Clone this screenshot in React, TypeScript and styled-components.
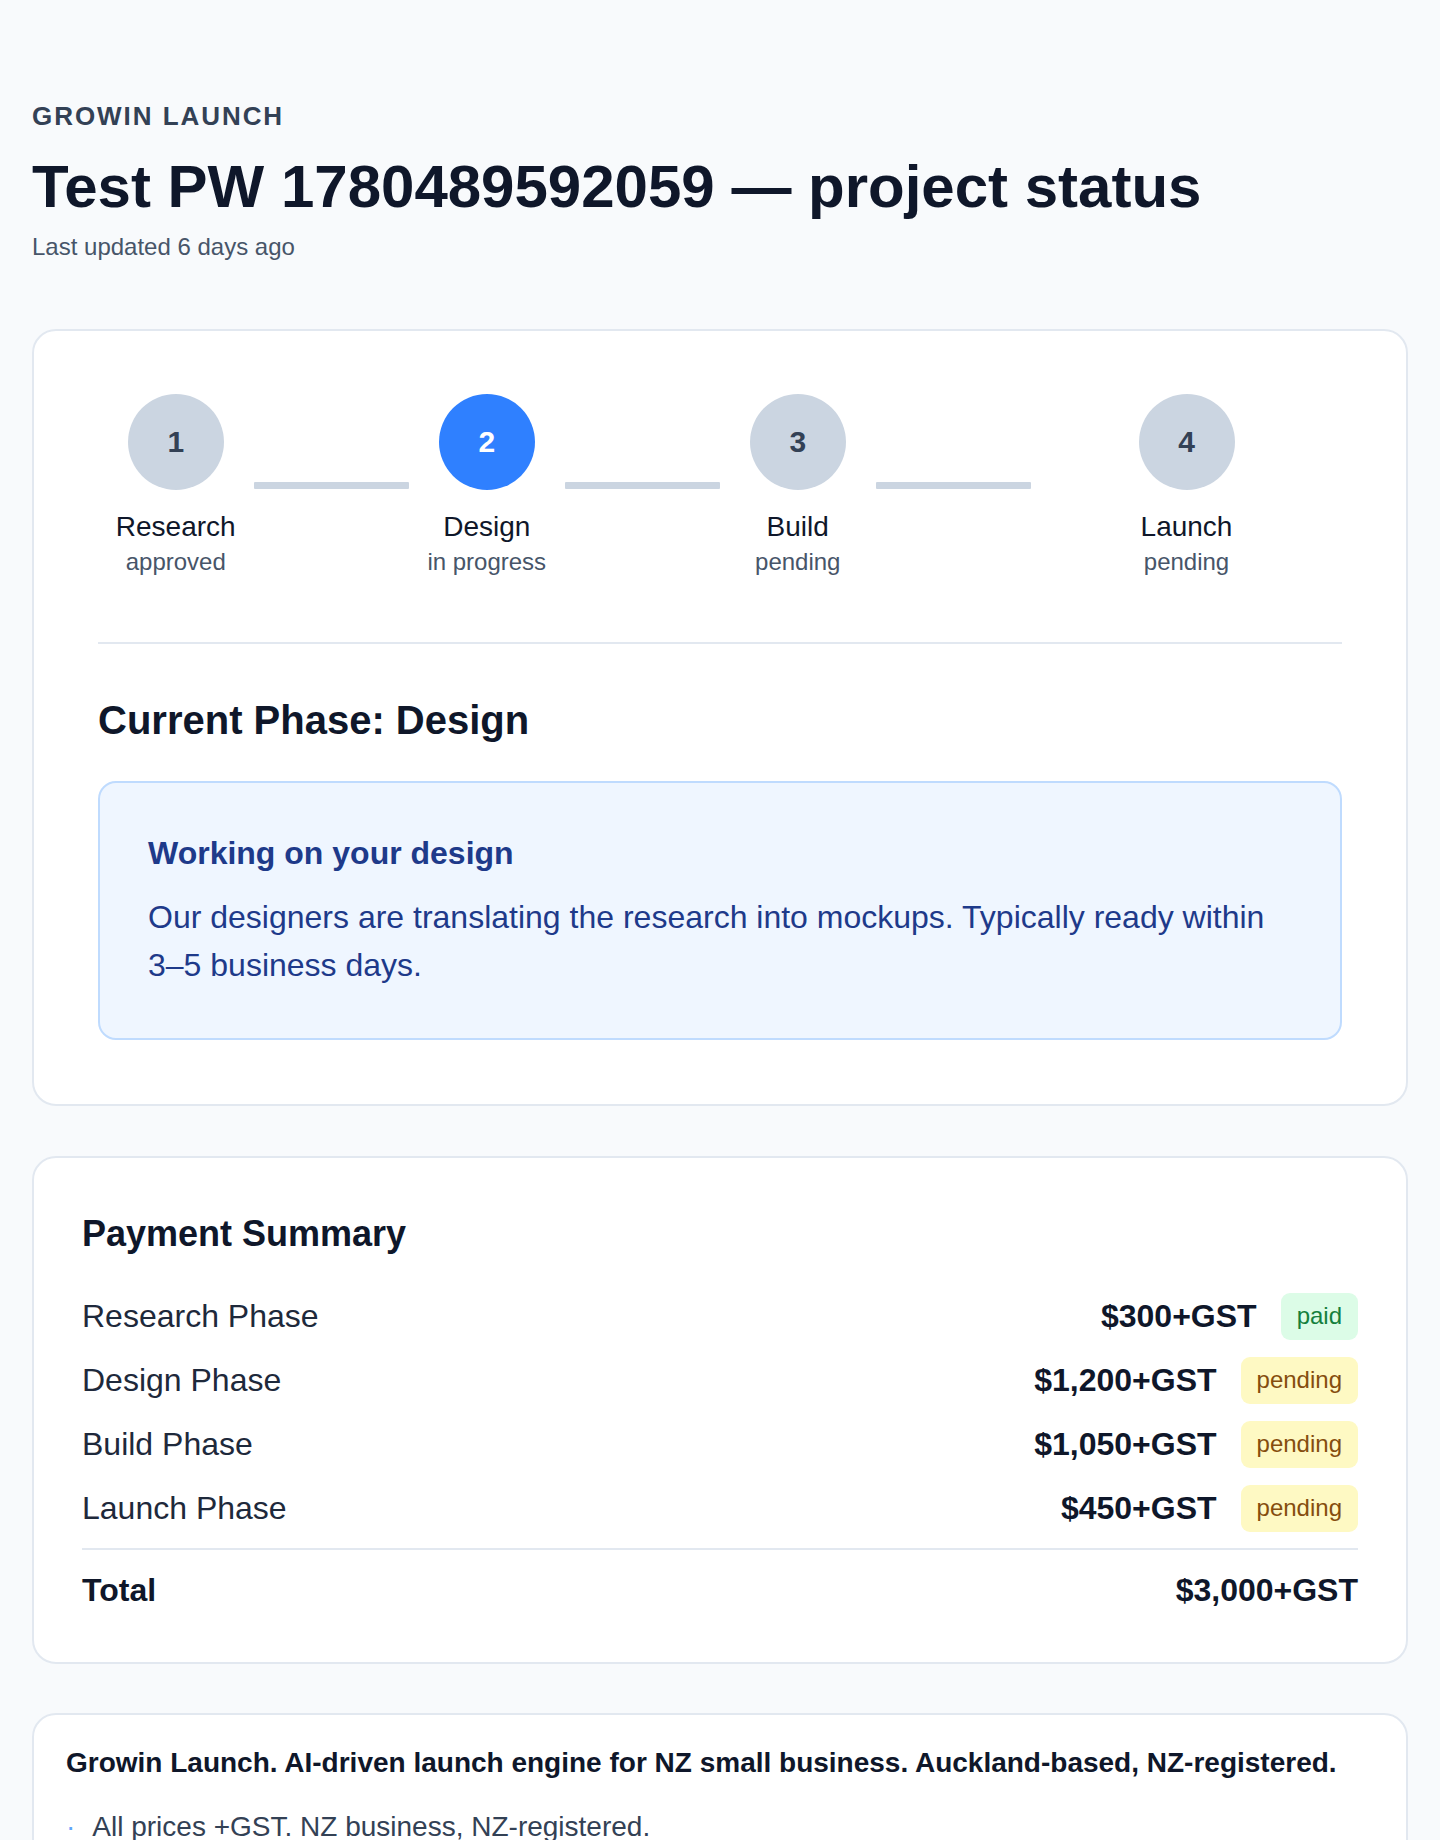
import styled, { createGlobalStyle } from "styled-components";

const GlobalStyle = createGlobalStyle`
  * {
    box-sizing: border-box;
  }
  body {
    margin: 0;
    background: #f8fafc;
    font-family: "Liberation Sans", Arial, Helvetica, sans-serif;
    color: #0f172a;
  }
`;

const Page = styled.main`
  padding: 97px 32px 64px;
`;

const Eyebrow = styled.div`
  font-size: 26px;
  line-height: 39px;
  font-weight: 700;
  letter-spacing: 0.075em;
  text-transform: uppercase;
  color: #334155;
`;

const Title = styled.h1`
  margin: 15px 0 0;
  font-size: 60px;
  line-height: 72px;
  font-weight: 700;
  color: #0f172a;
`;

const Updated = styled.div`
  margin-top: 6px;
  font-size: 24px;
  line-height: 36px;
  color: #475569;
`;

const Card = styled.section<{ $pad: string; $gap?: number }>`
  margin-top: ${(p) => p.$gap ?? 50}px;
  background: #ffffff;
  border: 2px solid #e2e8f0;
  border-radius: 24px;
  padding: ${(p) => p.$pad};
`;

const Stepper = styled.div`
  display: flex;
`;

const StepWrap = styled.div`
  flex: 1;
  display: flex;
  align-items: center;
`;

const StepCol = styled.div`
  flex: 1;
  display: flex;
  flex-direction: column;
  align-items: center;
`;

const Circle = styled.div<{ $active: boolean }>`
  width: 96px;
  height: 96px;
  border-radius: 50%;
  display: grid;
  place-items: center;
  margin-bottom: 19px;
  font-size: 30px;
  font-weight: 700;
  background: ${(p) => (p.$active ? "#2f80ff" : "#cbd5e1")};
  color: ${(p) => (p.$active ? "#ffffff" : "#334155")};
`;

const StepLabel = styled.div`
  font-size: 28px;
  line-height: 36.4px;
  color: #0f172a;
`;

const StepStatus = styled.div`
  margin-top: 1px;
  font-size: 24px;
  line-height: 31.2px;
  color: #475569;
`;

const Connector = styled.div`
  flex: 1;
  height: 7px;
  background: #cbd5e1;
  border-radius: 1px;
`;

const Divider = styled.div`
  height: 2px;
  margin-top: 64px;
  background: #e2e8f0;
`;

const PhaseTitle = styled.h2`
  margin: 50px 0 0;
  font-size: 40px;
  line-height: 52px;
  font-weight: 700;
  color: #0f172a;
`;

const InfoBox = styled.div`
  margin-top: 35px;
  background: #eff6ff;
  border: 2px solid #bfdbfe;
  border-radius: 18px;
  padding: 48px 48px 49px;
`;

const InfoTitle = styled.div`
  font-size: 32px;
  line-height: 44.8px;
  font-weight: 700;
  color: #1e3a8a;
`;

const InfoText = styled.p`
  margin: 18px 0 0;
  font-size: 32px;
  line-height: 48px;
  color: #1e3a8a;
`;

const SectionTitle = styled.h3`
  margin: 0 0 26px;
  font-size: 36px;
  line-height: 46.8px;
  font-weight: 700;
  color: #0f172a;
`;

const PayRow = styled.div`
  display: flex;
  align-items: center;
  justify-content: space-between;
  padding: 8px 0;
  font-size: 32px;
  line-height: 48px;
  color: #1e293b;
`;

const PayRight = styled.div`
  display: flex;
  align-items: center;
  gap: 24px;
`;

const Amount = styled.span`
  font-weight: 700;
  color: #0f172a;
`;

const Badge = styled.span<{ $paid: boolean }>`
  font-size: 24px;
  line-height: 36px;
  padding: 5.5px 16px;
  border-radius: 9px;
  background: ${(p) => (p.$paid ? "#dcfce7" : "#fef9c3")};
  color: ${(p) => (p.$paid ? "#15803d" : "#854d0e")};
`;

const TotalRow = styled.div`
  display: flex;
  justify-content: space-between;
  margin-top: 8px;
  padding-top: 16px;
  border-top: 2px solid #e2e8f0;
  font-size: 32px;
  line-height: 48px;
  font-weight: 700;
  color: #0f172a;
`;

const FooterLead = styled.p`
  margin: 0;
  font-size: 28px;
  line-height: 36.4px;
  font-weight: 700;
  color: #0f172a;
`;

const FooterList = styled.ul`
  margin: 24px 0 0;
  padding: 0;
  list-style: none;
`;

const FooterItem = styled.li`
  display: flex;
  font-size: 28px;
  line-height: 42px;
  color: #334155;
`;

const Dot = styled.span`
  margin-right: 17px;
  color: #60a5fa;
`;

const steps = [
  { n: 1, name: "Research", status: "approved" },
  { n: 2, name: "Design", status: "in progress" },
  { n: 3, name: "Build", status: "pending" },
  { n: 4, name: "Launch", status: "pending" },
];

const payments = [
  { phase: "Research Phase", amount: "$300+GST", status: "paid" },
  { phase: "Design Phase", amount: "$1,200+GST", status: "pending" },
  { phase: "Build Phase", amount: "$1,050+GST", status: "pending" },
  { phase: "Launch Phase", amount: "$450+GST", status: "pending" },
];

const App = () => {
  const current = 2;
  return (
    <>
      <GlobalStyle />
      <Page>
        <Eyebrow>Growin Launch</Eyebrow>
        <Title>Test PW 1780489592059 — project status</Title>
        <Updated>Last updated 6 days ago</Updated>

        <Card $pad="63px 64px 64px" $gap={64}>
          <Stepper>
            {steps.map((step, i) => (
              <StepWrap key={step.n}>
                <StepCol>
                  <Circle $active={step.n === current}>{step.n}</Circle>
                  <StepLabel>{step.name}</StepLabel>
                  <StepStatus>{step.status}</StepStatus>
                </StepCol>
                {i < steps.length - 1 && <Connector />}
              </StepWrap>
            ))}
          </Stepper>
          <Divider />
          <PhaseTitle>Current Phase: Design</PhaseTitle>
          <InfoBox>
            <InfoTitle>Working on your design</InfoTitle>
            <InfoText>
              Our designers are translating the research into mockups. Typically ready within 3–5 business days.
            </InfoText>
          </InfoBox>
        </Card>

        <Card $pad="53px 48px 48px" $gap={50}>
          <SectionTitle>Payment Summary</SectionTitle>
          {payments.map((p) => (
            <PayRow key={p.phase}>
              <span>{p.phase}</span>
              <PayRight>
                <Amount>{p.amount}</Amount>
                <Badge $paid={p.status === "paid"}>{p.status}</Badge>
              </PayRight>
            </PayRow>
          ))}
          <TotalRow>
            <span>Total</span>
            <span>$3,000+GST</span>
          </TotalRow>
        </Card>

        <Card $pad="30px 32px 32px" $gap={49}>
          <FooterLead>
            Growin Launch. AI-driven launch engine for NZ small business. Auckland-based, NZ-registered.
          </FooterLead>
          <FooterList>
            <FooterItem>
              <Dot>·</Dot>
              <span>All prices +GST. NZ business, NZ-registered.</span>
            </FooterItem>
          </FooterList>
        </Card>
      </Page>
    </>
  );
};

export default App;
